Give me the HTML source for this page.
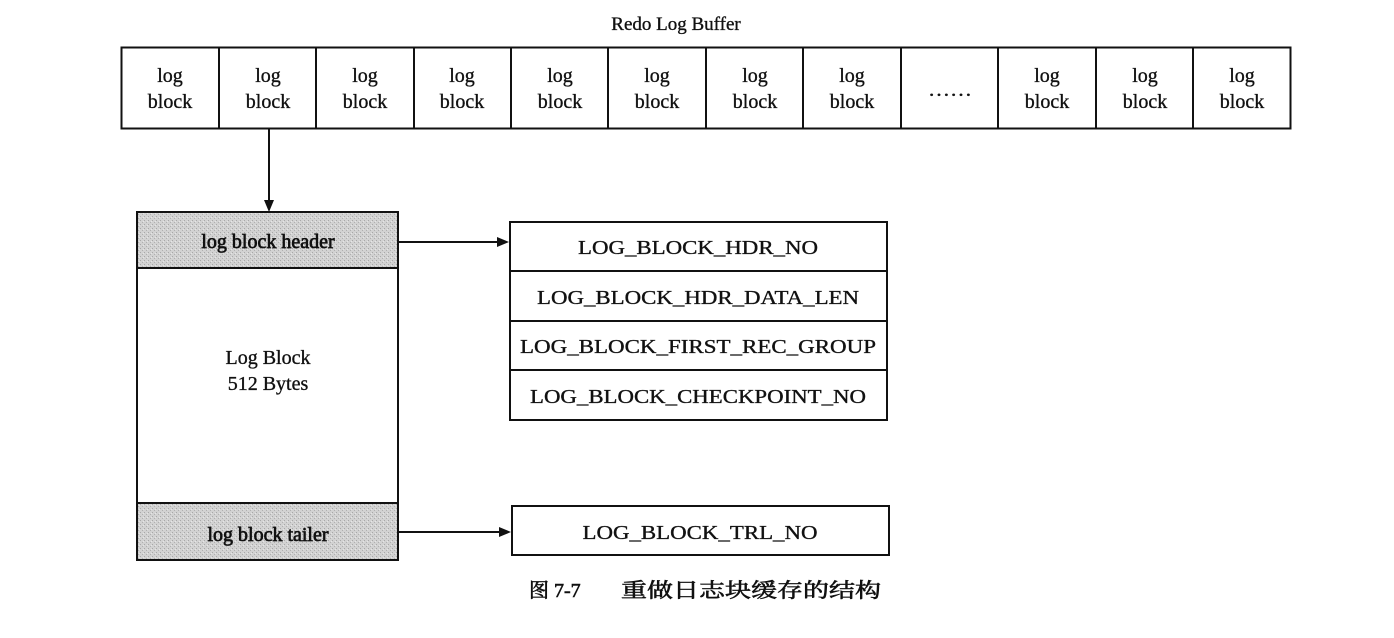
<!DOCTYPE html>
<html><head><meta charset="utf-8"><style>
html,body{margin:0;padding:0;background:#fff;}
svg{display:block}
text{font-family:"Liberation Serif","Noto Serif CJK SC",serif;fill:#111;stroke:#111;stroke-width:0.35;}
</style></head><body>
<svg width="1394" height="638" viewBox="0 0 1394 638" xmlns="http://www.w3.org/2000/svg">
<defs>
<pattern id="h" width="4" height="4" patternUnits="userSpaceOnUse">
<rect width="4" height="4" fill="#d2d2d2"/>
<rect x="0" y="0" width="1" height="1" fill="#a8a8a8"/>
<rect x="2" y="2" width="1" height="1" fill="#b0b0b0"/>
<rect x="3" y="1" width="1" height="1" fill="#e6e6e6"/>
</pattern>
</defs>
<text x="676" y="30" font-size="19" text-anchor="middle">Redo Log Buffer</text>
<rect x="121.5" y="47.5" width="1169" height="81" fill="none" stroke="#111" stroke-width="2"/>
<g stroke="#111" stroke-width="2">
<line x1="219" y1="47" x2="219" y2="128"/><line x1="316" y1="47" x2="316" y2="128"/>
<line x1="414" y1="47" x2="414" y2="128"/><line x1="511" y1="47" x2="511" y2="128"/>
<line x1="608" y1="47" x2="608" y2="128"/><line x1="706" y1="47" x2="706" y2="128"/>
<line x1="803" y1="47" x2="803" y2="128"/><line x1="901" y1="47" x2="901" y2="128"/>
<line x1="998" y1="47" x2="998" y2="128"/><line x1="1096" y1="47" x2="1096" y2="128"/>
<line x1="1193" y1="47" x2="1193" y2="128"/>
</g>
<g font-size="20" text-anchor="middle">
<text x="170" y="82">log</text><text x="170" y="108">block</text>
<text x="268" y="82">log</text><text x="268" y="108">block</text>
<text x="365" y="82">log</text><text x="365" y="108">block</text>
<text x="462" y="82">log</text><text x="462" y="108">block</text>
<text x="560" y="82">log</text><text x="560" y="108">block</text>
<text x="657" y="82">log</text><text x="657" y="108">block</text>
<text x="755" y="82">log</text><text x="755" y="108">block</text>
<text x="852" y="82">log</text><text x="852" y="108">block</text>
<text x="950" y="96" textLength="44" lengthAdjust="spacingAndGlyphs">……</text>
<text x="1047" y="82">log</text><text x="1047" y="108">block</text>
<text x="1145" y="82">log</text><text x="1145" y="108">block</text>
<text x="1242" y="82">log</text><text x="1242" y="108">block</text>
</g>
<line x1="269" y1="128" x2="269" y2="203" stroke="#111" stroke-width="2"/>
<polygon points="264,200 274,200 269,212" fill="#111"/>
<rect x="137" y="212" width="261" height="56" fill="url(#h)"/>
<rect x="137" y="503" width="261" height="57" fill="url(#h)"/>
<rect x="137" y="212" width="261" height="348" fill="none" stroke="#111" stroke-width="2"/>
<line x1="137" y1="268" x2="398" y2="268" stroke="#111" stroke-width="2"/>
<line x1="137" y1="503" x2="398" y2="503" stroke="#111" stroke-width="2"/>
<text x="268" y="248" font-size="20" text-anchor="middle" style="stroke-width:0.7">log block header</text>
<text x="268" y="364" font-size="20" text-anchor="middle">Log Block</text>
<text x="268" y="390" font-size="20" text-anchor="middle">512 Bytes</text>
<text x="268" y="541" font-size="20" text-anchor="middle" style="stroke-width:0.7">log block tailer</text>
<line x1="398" y1="242" x2="500" y2="242" stroke="#111" stroke-width="2"/>
<polygon points="497,237 509,242 497,247" fill="#111"/>
<line x1="398" y1="532" x2="502" y2="532" stroke="#111" stroke-width="2"/>
<polygon points="499,527 511,532 499,537" fill="#111"/>
<rect x="510" y="222" width="377" height="198" fill="none" stroke="#111" stroke-width="2"/>
<g stroke="#111" stroke-width="2">
<line x1="510" y1="271" x2="887" y2="271"/><line x1="510" y1="321" x2="887" y2="321"/><line x1="510" y1="370" x2="887" y2="370"/>
</g>
<g font-size="20" text-anchor="middle">
<text x="698" y="254" textLength="240" lengthAdjust="spacingAndGlyphs">LOG_BLOCK_HDR_NO</text>
<text x="698" y="304" textLength="322" lengthAdjust="spacingAndGlyphs">LOG_BLOCK_HDR_DATA_LEN</text>
<text x="698" y="353" textLength="356" lengthAdjust="spacingAndGlyphs">LOG_BLOCK_FIRST_REC_GROUP</text>
<text x="698" y="403" textLength="336" lengthAdjust="spacingAndGlyphs">LOG_BLOCK_CHECKPOINT_NO</text>
<text x="700" y="539" textLength="235" lengthAdjust="spacingAndGlyphs">LOG_BLOCK_TRL_NO</text>
</g>
<rect x="512" y="506" width="377" height="49" fill="none" stroke="#111" stroke-width="2"/>
<text x="529" y="597" font-size="20" font-family="'Noto Serif CJK SC',serif" style="stroke-width:0.6">图 7-7</text>
<text x="621" y="597" font-size="20" font-family="'Noto Serif CJK SC',serif" textLength="260" lengthAdjust="spacingAndGlyphs" style="stroke-width:0.6">重做日志块缓存的结构</text>
</svg>
</body></html>
